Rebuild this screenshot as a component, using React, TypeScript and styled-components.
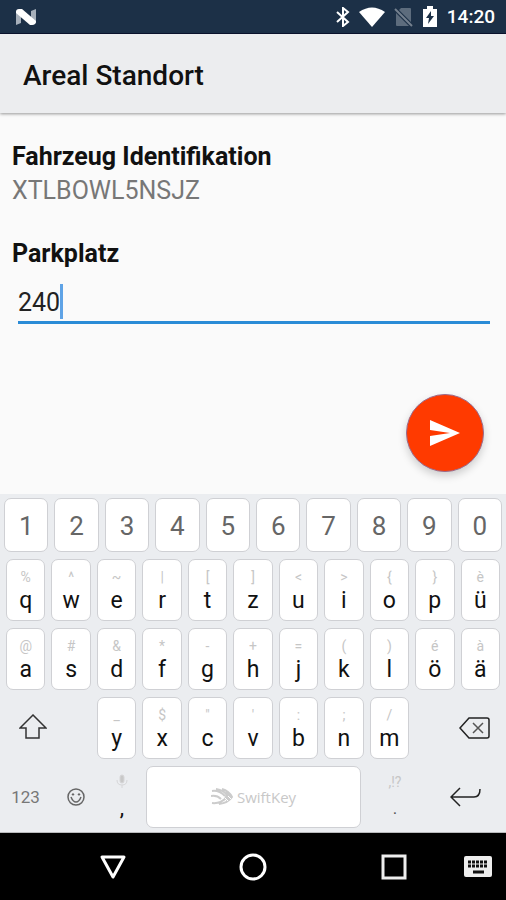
import React, { useState } from "react";
import styled, { createGlobalStyle } from "styled-components";

const GlobalStyle = createGlobalStyle`
  * { box-sizing: border-box; }
  body { margin: 0; background: #fafafa; font-family: Roboto, "Liberation Sans", sans-serif; color: #111; }
  button { font: inherit; color: inherit; padding: 0; border: 0; background: none; cursor: pointer; }
  svg { display: block; }
`;

const Screen = styled.div`
  min-height: 100vh;
  display: flex;
  flex-direction: column;
`;

const StatusBar = styled.div`
  display: flex;
  align-items: center;
  height: 34px;
  padding: 0 11px 0 14px;
  background: #1c3047;
  border-bottom: 1px solid #0b1430;
  color: #fff;
`;

const StatusIcons = styled.div`
  display: flex;
  align-items: center;
  gap: 9px;
  margin-left: auto;
`;

const Clock = styled.time`
  font-size: 19px;
  font-weight: 500;
  line-height: 24px;
`;

const AppBar = styled.header`
  display: flex;
  align-items: center;
  height: 79px;
  padding: 4px 23px 0;
  background: #ecedef;
  box-shadow: 0 1px 3px rgba(0, 0, 0, 0.4);
`;

const Title = styled.h1`
  margin: 0;
  font-size: 28px;
  line-height: 32px;
  font-weight: 500;
`;

const Content = styled.main`
  flex: 1;
  display: flex;
  flex-direction: column;
  padding: 28px 12px 22px;
`;

const Heading = styled.h2`
  margin: 0;
  font-size: 25px;
  line-height: 32px;
  font-weight: 700;
`;

const VehicleId = styled.p`
  margin: 0 0 29px;
  font-size: 25px;
  line-height: 36px;
  color: #777;
`;

const FieldLabel = styled.label`
  font-size: 25px;
  line-height: 32px;
  font-weight: 700;
`;

const Field = styled.div`
  display: flex;
  align-items: center;
  margin: 13px 4px 0 6px;
  padding-bottom: 2px;
  border-bottom: 3px solid #2a8bd6;
`;

const TextInput = styled.input`
  field-sizing: content;
  height: 36px;
  padding: 3px 0 0;
  border: 0;
  outline: 0;
  background: none;
  font: inherit;
  font-size: 25px;
  color: #222;
  caret-color: transparent;
`;

const Caret = styled.span`
  width: 3px;
  height: 35px;
  background: #5fa3e6;
`;

const SendButton = styled.button`
  && {
    align-self: flex-end;
    display: grid;
    place-items: center;
    width: 78px;
    height: 78px;
    margin: auto 10px 0 0;
    border-radius: 50%;
    border: 1px solid #9a6a8c;
    background: #ff3a00;
    box-shadow: 0 4px 9px rgba(0, 0, 0, 0.18);
  }
`;

const Keyboard = styled.section`
  display: flex;
  flex-direction: column;
  gap: 7px;
  padding: 4px 0;
  background: #ebedf0;
  border-bottom: 1px solid #b9babc;
`;

const KeyRow = styled.div<{ $columns: number }>`
  display: grid;
  grid-template-columns: repeat(${(p) => p.$columns}, 1fr);
  padding: 0 ${(p) => (p.$columns === 10 ? 1 : 3)}px;
`;

const Key = styled.button<{ $digit?: boolean }>`
  && {
    display: flex;
    flex-direction: column;
    align-items: center;
    justify-content: ${(p) => (p.$digit ? "center" : "flex-start")};
    height: ${(p) => (p.$digit ? 54 : 62)}px;
    margin: 0 3px;
    padding-top: ${(p) => (p.$digit ? 2 : 9)}px;
    border: 1px solid #cfd0d4;
    border-radius: 7px;
    background: #fff;
    color: ${(p) => (p.$digit ? "#666" : "#111")};
    font-size: ${(p) => (p.$digit ? 26 : 23)}px;
    line-height: 28px;
  }
`;

const Hint = styled.span`
  height: 18px;
  font-size: 14px;
  line-height: 16px;
  color: #c6c6c6;
`;

const PlainKey = styled.button<{ $align?: string }>`
  && {
    display: flex;
    align-items: center;
    justify-content: ${(p) => p.$align ?? "center"};
    grid-column: span 2;
    padding: 0 12px 0 16px;
  }
`;

const BottomRow = styled.div`
  display: grid;
  grid-template-columns: 51fr 50fr 42fr 221fr 62fr 80fr;
  height: 62px;
`;

const BottomKey = styled.button`
  && {
    display: flex;
    align-items: center;
    justify-content: center;
    font-size: 17px;
    color: #777;
  }
`;

const PunctuationKey = styled.button`
  && {
    display: flex;
    flex-direction: column;
    align-items: center;
    justify-content: space-between;
    padding: 8px 0 8px;
    font-size: 22px;
    line-height: 24px;
  }
`;

const FaintMark = styled.span`
  font-size: 17px;
  color: #555;
`;

const SpaceKey = styled.button`
  && {
    display: flex;
    align-items: center;
    justify-content: center;
    gap: 2px;
    margin: 0 3px;
    border: 1px solid #cfd0d4;
    border-radius: 7px;
    background: #fff;
    color: #c8c8c8;
    font-family: "Open Sans", sans-serif;
    font-size: 15px;
  }
`;

const NavBar = styled.nav`
  display: grid;
  grid-template-columns: 43fr 140fr 140fr 141fr 42fr;
  align-items: center;
  height: 67px;
  background: #000;
`;

const NavButton = styled.button<{ $column: number }>`
  && {
    grid-column: ${(p) => p.$column};
    grid-row: 1;
    display: grid;
    place-items: center;
  }
`;

const SwitcherButton = styled(NavButton)`
  && { justify-content: start; }
`;

const digits = "1234567890".split("");
const topRow = [["%", "q"], ["^", "w"], ["~", "e"], ["|", "r"], ["[", "t"], ["]", "z"], ["<", "u"], [">", "i"], ["{", "o"], ["}", "p"], ["è", "ü"]];
const homeRow = [["@", "a"], ["#", "s"], ["&", "d"], ["*", "f"], ["-", "g"], ["+", "h"], ["=", "j"], ["(", "k"], [")", "l"], ["é", "ö"], ["à", "ä"]];
const lowRow = [["_", "y"], ["$", "x"], ["\"", "c"], ["'", "v"], [":", "b"], [";", "n"], ["/", "m"]];

export default function App() {
  const [place, setPlace] = useState("240");
  const type = (c: string) => setPlace((p) => p + c);
  const letters = (row: string[][]) =>
    row.map(([hint, letter]) => (
      <Key key={letter} type="button" onClick={() => type(letter)}>
        <Hint>{hint}</Hint>
        {letter}
      </Key>
    ));

  return (
    <Screen>
      <GlobalStyle />
      <StatusBar>
        <svg width="24" height="18" viewBox="0 0 24 18" aria-hidden="true">
          <path d="M2 3 7 1v14l-5 2zM17 3l5-2v14l-5 2z" fill="#a6afba" />
          <path d="M2 4Q2 1 5 1h3L22 13q0 4-4 4h-2L2 5z" fill="#fff" />
        </svg>
        <StatusIcons>
          <svg width="14" height="20" viewBox="0 0 14 20" fill="none" stroke="#fff" strokeWidth="2" aria-hidden="true">
            <path d="m1 5 11 10-5 4V1l5 4L1 15" />
          </svg>
          <svg width="26" height="20" viewBox="0 0 26 20" aria-hidden="true">
            <path d="M0 5Q13-4 26 5L13 20z" fill="#fff" />
          </svg>
          <svg width="19" height="20" viewBox="0 0 19 20" aria-hidden="true">
            <path d="M7 1h9q1 0 1 1v13L5 3zM2 6l13 13H3q-1 0-1-1z" fill="#5d6c7d" />
            <path d="m1 2 17 17" stroke="#75818f" strokeWidth="2" />
          </svg>
          <svg width="16" height="21" viewBox="0 0 16 21" aria-hidden="true">
            <path d="M1 3h4V0h6v3h4v18H1z" fill="#fff" />
            <path d="m9 5-5 7h3l-1 6 6-8H9z" fill="#1c3047" />
          </svg>
          <Clock>14:20</Clock>
        </StatusIcons>
      </StatusBar>
      <AppBar>
        <Title>Areal Standort</Title>
      </AppBar>
      <Content>
        <Heading>Fahrzeug Identifikation</Heading>
        <VehicleId>XTLBOWL5NSJZ</VehicleId>
        <FieldLabel htmlFor="place">Parkplatz</FieldLabel>
        <Field>
          <TextInput id="place" value={place} onChange={(e) => setPlace(e.target.value)} />
          <Caret />
        </Field>
        <SendButton type="button" aria-label="Senden">
          <svg width="32" height="28" viewBox="0 0 32 28" aria-hidden="true">
            <path d="M1 1v10l20 3-20 3v10l30-13z" fill="#fff" />
          </svg>
        </SendButton>
      </Content>
      <Keyboard aria-label="Tastatur">
        <KeyRow $columns={10}>
          {digits.map((d) => (
            <Key key={d} type="button" $digit onClick={() => type(d)}>{d}</Key>
          ))}
        </KeyRow>
        <KeyRow $columns={11}>{letters(topRow)}</KeyRow>
        <KeyRow $columns={11}>{letters(homeRow)}</KeyRow>
        <KeyRow $columns={11}>
          <PlainKey type="button" $align="flex-start" aria-label="Umschalttaste">
            <svg width="28" height="28" viewBox="0 0 28 28" fill="none" stroke="#333" strokeWidth="1.5" aria-hidden="true">
              <path d="M14 1 1 14h6v10h13V14h7z" />
            </svg>
          </PlainKey>
          {letters(lowRow)}
          <PlainKey type="button" $align="flex-end" aria-label="Löschen" onClick={() => setPlace((p) => p.slice(0, -1))}>
            <svg width="32" height="22" viewBox="0 0 32 22" fill="none" stroke="#222" strokeWidth="1.5" aria-hidden="true">
              <path d="M10 1h18q2 0 2 2v16q0 2-2 2H10L1 11z" />
              <path d="m14 6 10 10M24 6 14 16" stroke="#555" />
            </svg>
          </PlainKey>
        </KeyRow>
        <BottomRow>
          <BottomKey type="button">123</BottomKey>
          <BottomKey type="button" aria-label="Emoji">
            <svg width="18" height="18" viewBox="0 0 18 18" fill="none" stroke="#666" strokeWidth="1.5" aria-hidden="true">
              <circle cx="9" cy="9" r="8" />
              <path d="M4 9q2 5 5 5t5-5M5 7l1-1 1 1M11 7l1-1 1 1" />
            </svg>
          </BottomKey>
          <PunctuationKey type="button" onClick={() => type(",")}>
            <svg width="12" height="15" viewBox="0 0 12 15" fill="none" stroke="#d6d6d8" aria-hidden="true">
              <rect x="4" y="1" width="4" height="8" rx="2" fill="#c8c8c8" />
              <path d="M1 6q0 5 5 5t5-5M6 11v3" />
            </svg>
            ,
          </PunctuationKey>
          <SpaceKey type="button" aria-label="SwiftKey Leertaste" onClick={() => type(" ")}>
            <svg width="24" height="18" viewBox="0 0 24 18" fill="none" stroke="#cccccc" strokeWidth="2" aria-hidden="true">
              <path d="M1 3q7-1 13 5M0 8q6-1 10 3M1 15q8 1 14-5M5 1q8 1 13 8M11 1q7 2 10 8-4 6-13 7" />
              <path d="M15 3q4 3 5 6l-4 4-2-4" fill="#cccccc" strokeWidth="1" />
              <path d="m14 10 3 3M17 8l3 3" stroke="#fff" strokeWidth="1" />
            </svg>
            <span>SwiftKey</span>
          </SpaceKey>
          <PunctuationKey type="button" onClick={() => type(".")}>
            <Hint>,!?</Hint>
            <FaintMark>.</FaintMark>
          </PunctuationKey>
          <BottomKey type="button" aria-label="Eingabe">
            <svg width="32" height="20" viewBox="0 0 32 20" fill="none" stroke="#222" strokeWidth="1.5" aria-hidden="true">
              <path d="M10 1 1 10l9 9M1 10h23q6 0 6-8" />
            </svg>
          </BottomKey>
        </BottomRow>
      </Keyboard>
      <NavBar>
        <NavButton type="button" $column={2} aria-label="Zurück">
          <svg width="28" height="26" viewBox="0 0 28 26" fill="none" stroke="#fff" strokeWidth="3" strokeLinejoin="round" aria-hidden="true">
            <path d="M3 3h22L14 23z" />
          </svg>
        </NavButton>
        <NavButton type="button" $column={3} aria-label="Startseite">
          <svg width="28" height="28" viewBox="0 0 28 28" fill="none" stroke="#fff" strokeWidth="3" aria-hidden="true">
            <circle cx="14" cy="14" r="12" />
          </svg>
        </NavButton>
        <NavButton type="button" $column={4} aria-label="Übersicht">
          <svg width="26" height="26" viewBox="0 0 26 26" fill="none" stroke="#eee" strokeWidth="3" aria-hidden="true">
            <rect x="2" y="2" width="22" height="22" />
          </svg>
        </NavButton>
        <SwitcherButton type="button" $column={5} aria-label="Tastatur wechseln">
          <svg width="28" height="21" viewBox="0 0 28 21" aria-hidden="true">
            <rect width="28" height="21" rx="2" fill="#eee" />
            <path d="M4 6h20M4 10h20" stroke="#111" strokeWidth="3" strokeDasharray="3 1" />
            <path d="M9 16h11" stroke="#111" strokeWidth="3" />
          </svg>
        </SwitcherButton>
      </NavBar>
    </Screen>
  );
}
